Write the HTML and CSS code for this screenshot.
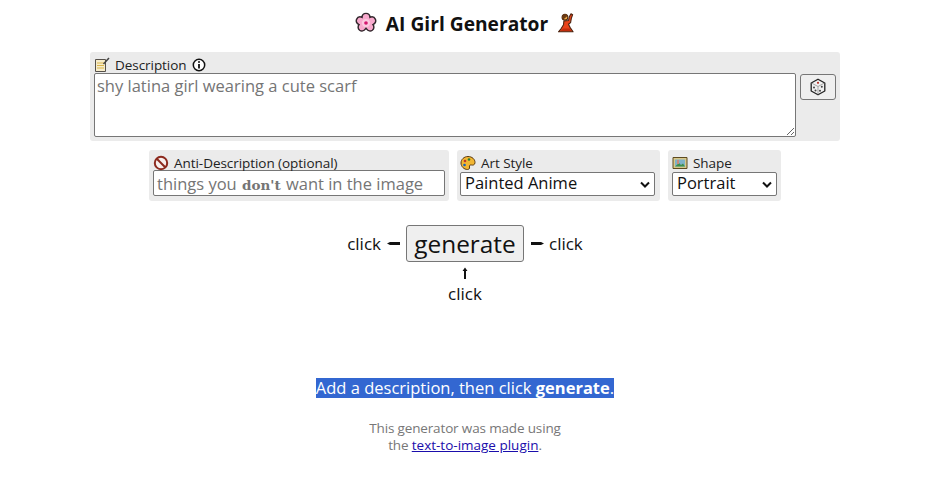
FILE: index.html
```html
<!DOCTYPE html>
<html lang="en">
<head>
<meta charset="utf-8">
<title>AI Girl Generator</title>
<link rel="stylesheet" href="styles.css">
</head>
<body>
<main class="page">
  <h1 class="title">
    <svg class="title-icon" viewBox="0 0 24 24" aria-hidden="true"><path d="M12 1.500c2.500 0 4.200 1.800 4.300 4.300 2.500-1 5 0 6 2.200 1 2.400-.2 4.700-2.700 5.700 1.500 2 1.300 4.700-.7 6.200-2 1.400-4.700.9-6.100-1.200l-.8-1-.8 1c-1.400 2.100-4.100 2.600-6.100 1.200-2-1.500-2.200-4.200-.7-6.200-2.500-1-3.700-3.300-2.700-5.700 1-2.200 3.500-3.200 6-2.200.1-2.500 1.800-4.300 4.300-4.300z" fill="#f8a9cd" stroke="#33262c" stroke-width="1.600"/><circle cx="12" cy="12" r="4.500" fill="#fbc9df"/><circle cx="12" cy="12" r="2" fill="#d5156e"/></svg>
    <span>AI Girl Generator</span>
    <svg class="title-icon title-icon-dancer" viewBox="0 0 24 24" aria-hidden="true"><path d="M9.500 9.500 15 9l1-4.500 2-3.500 2 1-1.500 4-1 5.500-2.500 2 2 4 3.500 5H3l3-3.500 3-5z" fill="#e8431a" stroke="#4a2410" stroke-width="1.300" stroke-linejoin="round"/><circle cx="10.800" cy="5" r="3.500" fill="#f0ab45" stroke="#4a2410" stroke-width="1.300"/><path d="M7.500 5c0-3 2-4 4-3.500 1 .2 2 1 2 2.500L8 8.500z" fill="#6b3a12"/><path d="M5.500 21.500h13l-2-3h-8z" fill="#c22c0c"/></svg>
  </h1>

  <section class="panel panel-main">
    <div class="desc-col">
      <div class="label">
        <svg class="ico" viewBox="0 0 16 16" aria-hidden="true"><path d="M1.500 2.500h10v12h-10z" fill="#f6eccb" stroke="#55504a"/><path d="M3 6h7M3 8.500h7M3 11h7" stroke="#d9b44a"/><path d="M15 1 9.500 7" stroke="#444" stroke-width="1.500"/></svg>
        <span>Description</span>
        <svg class="ico-info" viewBox="0 0 14 14" aria-hidden="true"><circle cx="7" cy="7" r="5.700" fill="#fff" stroke="#111" stroke-width="1.500"/><path d="M7 6v4.500" stroke="#111" stroke-width="1.800"/><circle cx="7" cy="4" r="1" fill="#111"/></svg>
      </div>
      <textarea class="desc-input" placeholder="shy latina girl wearing a cute scarf"></textarea>
    </div>
    <button class="dice" type="button" aria-label="Random">
      <svg viewBox="0 0 18 18" width="18" height="18" aria-hidden="true"><path d="M9 1.200 15.800 5v8L9 16.800 2.200 13V5z" fill="#f0f0f0" stroke="#222" stroke-width="1.300" stroke-linejoin="round"/><path d="M2.500 5 9 8.500 15.500 5M9 8.500v8" fill="none" stroke="#888" stroke-width=".7"/><circle cx="9" cy="4.800" r="1.100" fill="#b8332a"/><circle cx="5" cy="9.500" r="1" fill="#444"/><circle cx="6.500" cy="12.500" r="1" fill="#444"/><circle cx="12.800" cy="8.800" r="1" fill="#444"/><circle cx="11" cy="12.800" r="1" fill="#444"/></svg>
    </button>
  </section>

  <section class="options">
    <div class="panel panel-opt panel-anti">
      <div class="label label-anti">
        <svg class="ico" viewBox="0 0 16 16" aria-hidden="true"><circle cx="8" cy="8" r="6.200" fill="#f8f0ee" stroke="#8c2a1e" stroke-width="2"/><path d="M3.800 3.800 12.200 12.200" stroke="#8c2a1e" stroke-width="2"/></svg>
        <span>Anti-Description (optional)</span>
      </div>
      <div class="anti-input" role="textbox"><span>things you <b class="dont">don't</b> want in the image</span></div>
    </div>
    <div class="panel panel-opt panel-style">
      <div class="label">
        <svg class="ico" viewBox="0 0 16 16" aria-hidden="true"><path d="M8 1.500c4 0 7 2.700 7 6 0 2.500-2 2.800-3.500 2.500-1.500-.3-2.500.5-2 2 .4 1.500-.5 2.500-2 2.500C4 14.500 1 11.500 1 8s3-6.500 7-6.500z" fill="#f2b632" stroke="#5a3a10"/><circle cx="5" cy="6" r="1.300" fill="#c0392b"/><circle cx="9" cy="4.500" r="1.300" fill="#2e7d32"/><circle cx="4.500" cy="10" r="1.300" fill="#1565c0"/></svg>
        <span>Art Style</span>
      </div>
      <select class="select select-style"><option>Painted Anime</option></select>
    </div>
    <div class="panel panel-opt panel-shape">
      <div class="label">
        <svg class="ico" viewBox="0 0 16 16" aria-hidden="true"><path d="M1 2.500h14v11H1z" fill="#d9c88a" stroke="#5d4a1e"/><path d="M3 4.500h10v7H3z" fill="#7fb2c9"/><path d="M3 11.500 7 8l2 2 2-1.500 2 3z" fill="#3f8f4a"/><path d="M5 5h2v4H5z" fill="#c98a7a"/></svg>
        <span>Shape</span>
      </div>
      <select class="select select-shape"><option>Portrait</option></select>
    </div>
  </section>

  <section class="generate">
    <div class="generate-row">
      <span>click</span>
      <svg class="dash" viewBox="0 0 13 5" aria-hidden="true"><path d="M0 2.500 3 1h10v3H3z" fill="#111"/></svg>
      <button class="generate-btn" type="button">generate</button>
      <svg class="dash dash-right" viewBox="0 0 13 5" aria-hidden="true"><path d="M13 2.500 10 1H0v3h10z" fill="#111"/></svg>
      <span>click</span>
    </div>
    <svg class="up-arrow" viewBox="0 0 8 12" aria-hidden="true"><path d="M4 .5 1.500 4H3v8h2V4h1.500z" fill="#111"/></svg>
    <div class="click-below">click</div>
  </section>

  <p class="status"><span class="status-mark">Add a description, then click <b>generate</b>.</span></p>

  <footer class="foot">
    <div>This generator was made using</div>
    <div>the <a href="#">text-to-image plugin</a>.</div>
  </footer>
</main>
</body>
</html>
```

FILE: styles.css
```css
* { box-sizing: border-box; }
html, body { margin: 0; padding: 0; background: #fff; }
body { font-family: "Open Sans", "Noto Sans", sans-serif; color: #111; height: 494px; overflow: hidden; }
.page { display: flex; flex-direction: column; align-items: center; padding-left: 3px; padding-top: 11px; }

.title { display: flex; align-items: center; gap: 9px; margin: 0; height: 24px; font-size: 19.2px; font-weight: 700; color: #111; }
.title-icon { width: 22px; height: 22px; margin-left: 1px; }
.title-icon-dancer { width: 20px; margin-left: -1px; }

.panel { background: #ebebeb; border-radius: 3px; }
.panel-main { width: 750px; height: 89px; margin-top: 17px; padding: 5px 4px 4px; display: flex; gap: 4px; }
.desc-col { display: flex; flex-direction: column; width: 702px; }

.label { display: flex; align-items: center; gap: 5px; height: 16px; font-size: 13.5px; line-height: 16px; color: #222; letter-spacing: -0.05px; white-space: nowrap; }
.label-anti { height: 15px; }
.ico { width: 16px; height: 16px; flex: none; }
.ico-info { width: 14px; height: 14px; flex: none; }

.desc-input { display: block; width: 702px; height: 64px; margin: 0; padding: 2px; border: 1px solid #767676; border-radius: 2px; font: 16.5px/20px "Open Sans", sans-serif; background: #fff; resize: vertical; }
.desc-input::placeholder { color: #757575; opacity: 1; }

.dice { align-self: flex-start; width: 36px; height: 26px; margin-top: 17px; padding: 0; display: flex; align-items: center; justify-content: center; background: #efefef; border: 1px solid #767676; border-radius: 3px; }

.options { display: flex; align-items: flex-start; gap: 8px; margin-top: 9px; }
.panel-opt { height: 51px; padding: 5px 4px; }
.panel-anti { width: 300px; }
.panel-style { width: 203px; padding-left: 3px; }
.panel-shape { width: 113px; }
.anti-input { width: 292px; height: 26px; background: #fff; border: 1px solid #767676; border-radius: 2px; padding: 0 3px; font-size: 16.5px; line-height: 25px; color: #757575; white-space: nowrap; overflow: hidden; }
.dont { font-family: "DejaVu Serif", serif; font-size: 13.5px; font-weight: 700; margin-left: 1px; margin-right: 1px; }
.select { display: block; height: 24px; margin-top: 1px; font: 16.5px/20px "Open Sans", sans-serif; color: #111; border: 1px solid #767676; border-radius: 2px; padding: 0 20px 2px 4px; appearance: none; background: #fff url("data:image/svg+xml,%3Csvg xmlns='http://www.w3.org/2000/svg' width='10' height='7' viewBox='0 0 10 7'%3E%3Cpath d='M1 1.500 5 5.500 9 1.500' fill='none' stroke='%23111' stroke-width='2'/%3E%3C/svg%3E") no-repeat right 4px center; }
.select-style { width: 195px; }
.select-shape { width: 105px; }

.generate { display: flex; flex-direction: column; align-items: center; margin-top: 24px; font-size: 17px; color: #111; }
.generate-row { display: flex; align-items: center; gap: 6px; height: 37px; }
.dash { display: block; width: 13px; height: 5px; flex: none; }
.dash-right { margin-left: 1px; margin-right: -1px; }
.generate-btn { width: 118px; height: 37px; margin: 0; padding: 0; background: #efefef; border: 1px solid #767676; border-radius: 3px; font: 24.4px "Open Sans", sans-serif; color: #111; }
.up-arrow { width: 8px; height: 12px; margin-top: 5px; }
.click-below { line-height: 22px; height: 22px; margin-top: 4px; }

.status { margin: 73px 0 0; height: 22px; font-size: 16.5px; line-height: 20px; color: #fff; }
.status-mark { display: inline-block; background: #3367d1; height: 20px; }

.foot { margin-top: 20px; text-align: center; font-size: 13.5px; line-height: 17px; color: #777; letter-spacing: -0.15px; }
.foot a { color: #1a0dab; letter-spacing: 0; }
```
